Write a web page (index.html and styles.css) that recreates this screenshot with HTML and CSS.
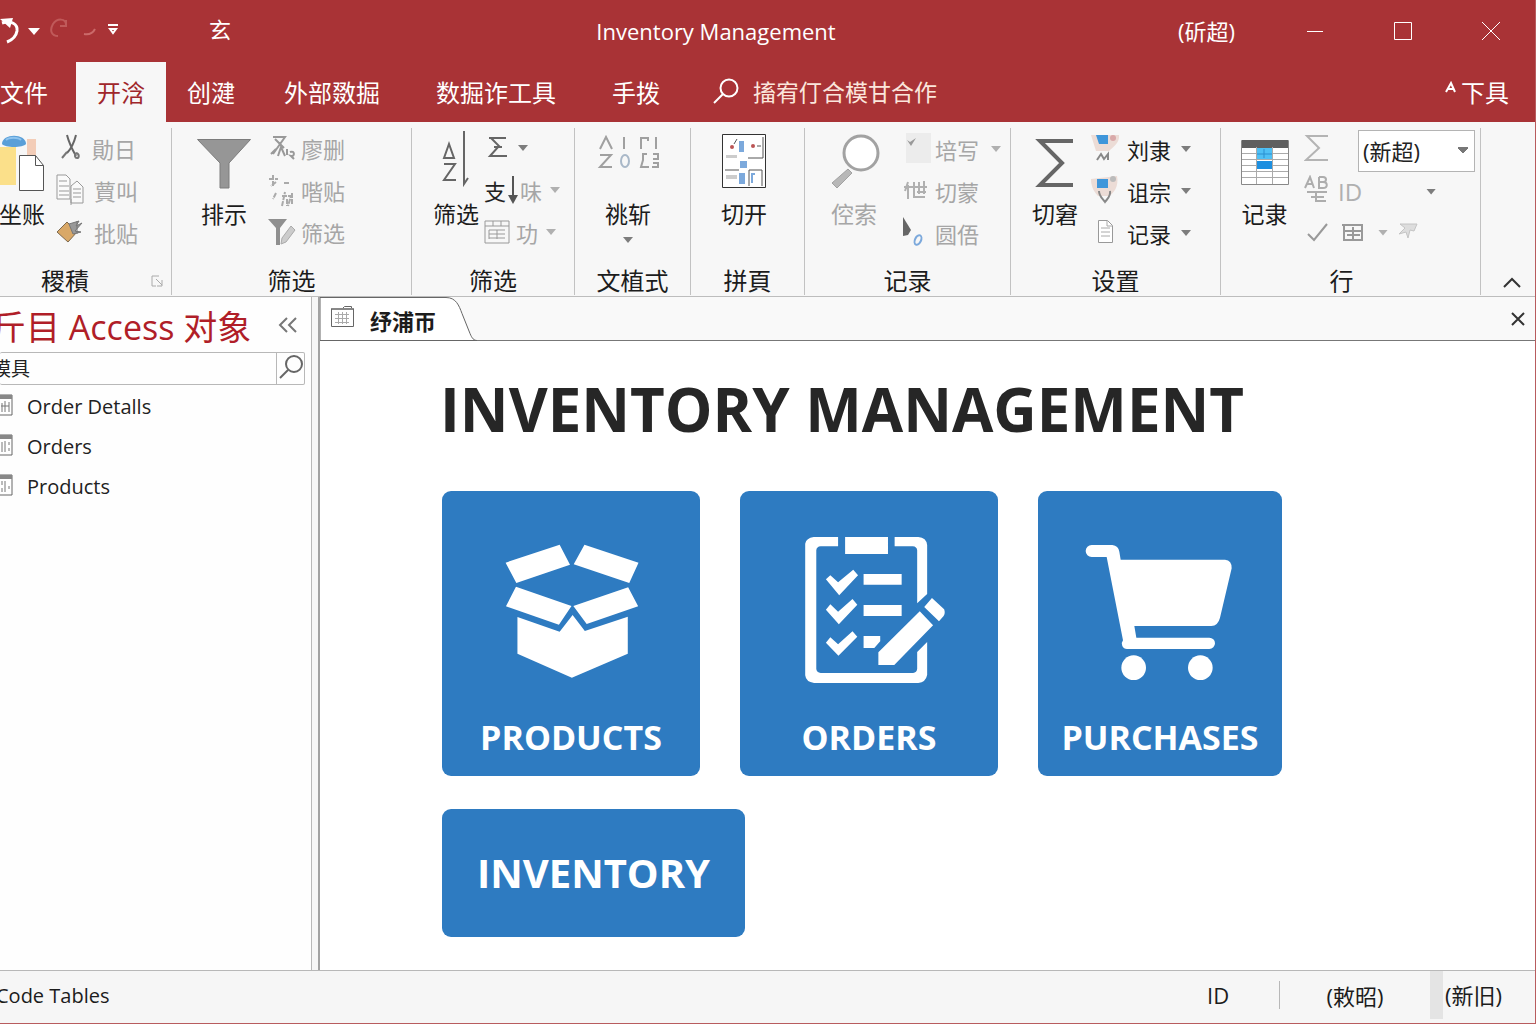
FILE: index.html
```html
<!DOCTYPE html>
<html lang="zh-CN">
<head>
<meta charset="utf-8">
<meta name="viewport" content="width=device-width, initial-scale=1">
<title>Inventory Management</title>
<link rel="stylesheet" href="styles.css">
</head>
<body>
<div class="app">
  <header class="titlebar">
    <div class="quick-access">
      <button class="qa" aria-label="Undo"><svg width="42" height="30" viewBox="0 0 42 30"><path d="M0 3l13-1-3 10" fill="#fff"/><path d="M2 7c9-3 16 1 15 8-1 6-5 9-10 11" fill="none" stroke="#fff" stroke-width="3"/><path d="M28 12h12l-6 7z" fill="#fff"/></svg></button>
      <button class="qa" aria-label="Redo"><svg width="48" height="30" viewBox="0 0 48 30"><path d="M17 9c0-7-9-7-13-1-4 7-1 12 5 12M17 4v6h-6" fill="none" stroke="#c05a5a" stroke-width="2"/><path d="M35 18c6 1 9-1 11-5" fill="none" stroke="#cb6a6a" stroke-width="2"/></svg></button>
      <button class="qa" aria-label="Customize"><svg width="16" height="30" viewBox="0 0 16 30"><path d="M4 9h10M6 13l3 4 3-4z" fill="none" stroke="#fff" stroke-width="2"/></svg></button>
      <span class="qa-text">玄</span>
    </div>
    <div class="window-title">Inventory Management</div>
    <span class="account">(斫超)</span>
    <div class="window-buttons">
      <button aria-label="Minimize"><svg width="20" height="20" viewBox="0 0 20 20"><path d="M2 10.500h16" /></svg></button>
      <button aria-label="Maximize"><svg width="20" height="20" viewBox="0 0 20 20"><path d="M1.500 1.500h17v17h-17z"/></svg></button>
      <button aria-label="Close"><svg width="20" height="20" viewBox="0 0 20 20"><path d="M1 1l18 18M19 1L1 19"/></svg></button>
    </div>
  </header>

  <nav class="tabs">
    <button class="tab file">文件</button>
    <button class="tab active">开浛</button>
    <button class="tab">创湕</button>
    <button class="tab wide">外部敪掘</button>
    <button class="tab wide">数掘诈工具</button>
    <button class="tab wide">手拨</button>
    <button class="tell-me"><svg width="26" height="26" viewBox="0 0 26 26"><circle cx="16" cy="10" r="8.500"/><path d="M10 16l-9 9"/></svg>搐宥仃合模甘合作</button>
    <button class="share"><svg width="12" height="12" viewBox="0 0 12 12"><path d="M1 11l5-9 4 9M3 8h6"/></svg>下具</button>
  </nav>

  <section class="ribbon" aria-label="Ribbon">
    <div class="group g-clip">
      <div class="body">
        <button class="big"><svg width="48" height="60" viewBox="0 0 48 60"><path d="M0 16h18v38H0z" fill="#fbe08a"/><path d="M29 8h9v16h-9z" fill="#f3cdb8"/><path d="M4 13c0-11 24-11 24 0-3 4-21 4-24 0z" fill="#5a9fd8"/><path d="M8 9c3-3 12-3 15 0" fill="none" stroke="#8fc4ee" stroke-width="2"/><path d="M21.500 24.500h16l8 10v25h-24z" fill="#fff" stroke="#555"/><path d="M37.500 24.500v10h8" fill="none" stroke="#555"/></svg>坐账</button>
        <div class="rows">
          <button class="row off"><svg width="28" height="30" viewBox="0 0 28 30"><path d="M11 2c2 8 5 14 9 21M20 2c-2 8-5 14-9 18" fill="none" stroke="#666" stroke-width="2"/><path d="M11 19l-5 6M20 20c4 1 3 5 1 5s-3-3-1-5" fill="none" stroke="#777" stroke-width="2"/></svg>勛日</button>
          <button class="row off"><svg width="30" height="32" viewBox="0 0 30 32"><path d="M1 1h9l4 4v20H1zM15 12l6-5 6 6v16H15z" fill="#fafafa" stroke="#999"/><path d="M3 7h8M3 12h10M3 17h10M3 21h10M17 15h8M17 19h8M17 23h8M15 25v6" stroke="#999"/></svg>蕒叫</button>
          <button class="row off"><svg width="30" height="26" viewBox="0 0 30 26"><path d="M1 13L11 3l10 10-9 10z" fill="#d9a867" stroke="#7d6a50"/><path d="M13 5l10-3-3 5 6-3-7 8 6 1-8 2zM21 2v13" fill="#999" stroke="#777"/></svg>批贴</button>
        </div>
      </div>
      <div class="caption">稷積<button class="launcher" aria-label="Launcher"><svg width="12" height="12" viewBox="0 0 12 12"><path d="M8 1H1v10h4M5 4l6 6M11 5v6H6" fill="none" stroke="#aaa"/></svg></button></div>
    </div>

    <div class="group g-filter">
      <div class="body">
        <button class="big"><svg width="54" height="60" viewBox="0 0 54 60"><path d="M.500 8.500h53L32 32v25h-9V32z" fill="#969696" stroke="#7c7c7c"/></svg>排示</button>
        <div class="rows">
          <button class="row off"><svg width="28" height="28" viewBox="0 0 28 28"><path d="M5 3h12L5 20M7 5l9 9M3 20l5-5M10 22l3-9 4 9M19 15v6M22 18c5-2 5 5 1 4l3 3" fill="none" stroke="#999" stroke-width="2"/></svg>廖删</button>
          <button class="row off"><svg width="28" height="34" viewBox="0 0 28 34"><path d="M1 6h9M5 2v12M8 9l-5 4M16 10h5M8 20l-3 6M14 23h9l-3 10M14 33l3-14M19 26v7M24 20v12" fill="none" stroke="#aaa" stroke-width="2" stroke-dasharray="5 1"/></svg>喈贴</button>
          <button class="row off"><svg width="28" height="30" viewBox="0 0 28 30"><path d="M0 2h19l-7 9v17H8V11z" fill="#8f8f8f"/><path d="M14 21l9-12 4 4-9 12-5 2z" fill="#ccc" stroke="#aaa"/></svg>筛选</button>
        </div>
      </div>
      <div class="caption">筛选</div>
    </div>

    <div class="group g-sort">
      <div class="body">
        <button class="big"><svg width="30" height="60" viewBox="0 0 30 60"><path d="M3 27l5-14 5 14zM3 33h11L3 49h12M23 0v53l4-6" fill="none" stroke="#666" stroke-width="2"/></svg>筛选</button>
        <div class="rows">
          <button class="row off"><svg width="26" height="26" viewBox="0 0 26 26"><path d="M22 3H5M7 3l8 8L6 21h17M10 12h8" fill="none" stroke="#666" stroke-width="2"/></svg><i class="caret"></i></button>
          <button class="row off"><span class="dark">支</span><svg width="10" height="30" viewBox="0 0 10 30"><path d="M5 1v22" stroke="#555" stroke-width="2"/><path d="M0 20h10l-5 9z" fill="#555"/></svg>味<i class="caret light"></i></button>
          <button class="row off"><svg width="26" height="26" viewBox="0 0 26 26"><path d="M1 2h24v22H1zM1 7h24M9 2v5M17 2v5M5 11h16M5 15h16M5 19h16M13 11v9M5 11v9" fill="none" stroke="#999"/></svg><span class="label">功</span><i class="caret light"></i></button>
        </div>
      </div>
      <div class="caption">筛选</div>
    </div>

    <div class="group g-text">
      <div class="body">
        <button class="big"><svg width="62" height="60" viewBox="0 0 62 60"><g fill="none" stroke="#a0a0a0" stroke-width="2"><path d="M3 18l6-12 6 12M3 24h11L3 36h12M27 6v12M43 7h8v3M44 7v11M59 6v12"/><path d="M50 23h-4v6l-2 7h8M56 23h5v5h-5M56 32h5v4h-6"/><ellipse cx="28" cy="30" rx="4" ry="6" stroke="#a9b8c8"/></g></svg>祧斩<i class="caret"></i></button>
      </div>
      <div class="caption">文植式</div>
    </div>

    <div class="group g-open">
      <div class="body">
        <button class="big"><svg width="44" height="60" viewBox="0 0 44 60"><path d="M.500 3.500h43v53H.500z" fill="#fff" stroke="#333"/><path d="M17 10h5v11h-5zM18 30h7v7h-7zM17 42h6v11h-6z" fill="#7ca9dc"/><circle cx="10" cy="16" r="2" fill="#b55"/><circle cx="31" cy="15" r="2" fill="#b55"/><path d="M4 24h11v3H4zM4 44h11v4H4z" fill="#ccc"/><path d="M26 27h15V6M3 39h14M27 55V39h13v16M12 13l3-5M35 15h4" fill="none" stroke="#555"/><path d="M33 43h-3v9" fill="none" stroke="#7ca9dc" stroke-width="2"/></svg>切开</button>
      </div>
      <div class="caption">拼頁</div>
    </div>

    <div class="group g-find">
      <div class="body">
        <button class="big off"><svg width="52" height="60" viewBox="0 0 52 60"><circle cx="33" cy="22" r="17" fill="#fff" stroke="#a2a2a2" stroke-width="3"/><path d="M20 38l4 4-15 15-5-5z" fill="#b8b8b8" stroke="#a2a2a2"/></svg>倥索</button>
        <div class="rows low">
          <button class="row off"><svg width="32" height="34" viewBox="0 0 32 34"><path d="M3 1h25v30H3z" fill="#ececec"/><path d="M4 8l4 6 5-8-6 4z" fill="#999"/></svg>培写<i class="caret light"></i></button>
          <button class="row off"><svg width="32" height="24" viewBox="0 0 32 24"><path d="M1 8h23M5 3L2 12M5 6v14M11 3v15h11M16 3v12M21 2v13M14 13h9" fill="none" stroke="#b0b0b0" stroke-width="2"/></svg>切蒙</button>
          <button class="row off"><svg width="32" height="34" viewBox="0 0 32 34"><path d="M0 1l8 13-3 5-5 1z" fill="#666"/><ellipse cx="15" cy="24" rx="3" ry="5" transform="rotate(25 15 24)" fill="none" stroke="#7ca9dc" stroke-width="2"/></svg>圆俉</button>
        </div>
      </div>
      <div class="caption">记录</div>
    </div>

    <div class="group g-set">
      <div class="body">
        <button class="big"><svg width="40" height="60" viewBox="0 0 40 60"><path d="M38 10H5l22 22L5 54h33" fill="none" stroke="#666" stroke-width="4"/></svg>切窘</button>
        <div class="rows low">
          <button class="row"><svg width="32" height="34" viewBox="0 0 32 34"><path d="M0 3h28c1 8-6 12-10 16H5z" fill="#ecdcd6"/><path d="M5 3h12v9H8z" fill="#3f96da"/><circle cx="22" cy="6" r="3" fill="#d9a9a9"/><path d="M6 28l4-6 3 5 4-5v6" fill="none" stroke="#888" stroke-width="2"/></svg>刘隶<i class="caret"></i></button>
          <button class="row"><svg width="32" height="34" viewBox="0 0 32 34"><path d="M0 5l26-3c2 10-3 17-8 20H7C2 17 0 11 0 5z" fill="#ecdcd6"/><path d="M6 5h11v9H6z" fill="#3f96da"/><circle cx="22" cy="5" r="3" fill="#bbb"/><path d="M8 17c0 5 3 7 6 11 3-4 6-6 5-11" fill="none" stroke="#888" stroke-width="2"/></svg>诅宗<i class="caret"></i></button>
          <button class="row"><svg width="32" height="34" viewBox="0 0 32 34"><path d="M7.500 4.500h9l5 5v17h-14z" fill="#fff" stroke="#999"/><path d="M10 12h9M10 16h9M10 20h9M16 5v5h5" fill="none" stroke="#aaa"/></svg>记录<i class="caret"></i></button>
        </div>
      </div>
      <div class="caption">设置</div>
    </div>

    <div class="group g-row">
      <div class="body">
        <button class="big"><svg width="48" height="60" viewBox="0 0 48 60"><path d="M.500 9.500h47v44H.500z" fill="#fff" stroke="#888"/><path d="M1 17v-8h46v8z" fill="#5f5f5f"/><path d="M1 22.500h46M1 28.500h46M1 34.500h46M1 40.500h46M1 46.500h46M15.500 16v37M31.500 16v37" stroke="#aaa"/><path d="M16 17h15v11H16z" fill="#4fc0f5"/><path d="M16 30h15v8H16z" fill="#1c8fe0"/><path d="M16 23h15M23 18v9" stroke="#2a8fd0"/></svg>记隶</button>
        <div class="controls">
          <div class="control-row"><button class="mini" aria-label="Totals"><svg width="26" height="34" viewBox="0 0 26 34"><path d="M24 2H3l12 12L2 26h22" fill="none" stroke="#b4b4b4" stroke-width="2"/></svg></button>
            <select class="combo" aria-label="Font"><option>(新超)</option></select></div>
          <div class="control-row"><button class="mini" aria-label="Spelling"><svg width="26" height="34" viewBox="0 0 26 34"><path d="M1 13L6 2l4 11M3 9h6M15 2v11h4c5 0 5-6 0-6h-4M15 2h4c4 0 4 5 0 5M3 17h20M7 22h13M12 17v9h10" fill="none" stroke="#adadad" stroke-width="2"/></svg></button>
            <span class="id-mark">ID</span><i class="caret gap-l"></i></div>
          <div class="control-row"><button class="mini" aria-label="Apply"><svg width="26" height="24" viewBox="0 0 26 24"><path d="M4 13l6 6L23 3" fill="none" stroke="#999" stroke-width="2"/></svg></button>
            <button class="mini" aria-label="Table"><svg width="26" height="24" viewBox="0 0 26 24"><path d="M4 4h21M6 5v14h18V5M6 10h18M15 6v13M9 14h13" fill="none" stroke="#999" stroke-width="2"/></svg></button><i class="caret light gap-s"></i>
            <button class="mini" aria-label="Filter"><svg width="24" height="24" viewBox="0 0 24 24"><path d="M4 3h17l-3 7-4-1-2 8-2-6-7 2 6-6z" fill="#ddd" stroke="#c4c4c4"/></svg></button></div>
        </div>
      </div>
      <div class="caption">行</div>
    </div>
    <button class="collapse" aria-label="Collapse ribbon"><svg width="18" height="11" viewBox="0 0 18 11"><path d="M1 10l8-8 8 8" fill="none" stroke="#333" stroke-width="2"/></svg></button>
  </section>

  <div class="workspace">
    <aside class="nav-pane">
      <div class="nav-head"><h2>斤目 Access 对象</h2><button class="shutter" aria-label="Collapse pane"><svg width="20" height="16" viewBox="0 0 20 16"><path d="M9 1L2 8l7 7M18 1l-7 7 7 7" fill="none" stroke="#777" stroke-width="2"/></svg></button></div>
      <form class="search"><input type="text" value="模具" aria-label="Search"><button type="button" aria-label="Search"><svg width="24" height="28" viewBox="0 0 24 28"><circle cx="15" cy="9" r="8"/><path d="M9 15l-8 8"/></svg></button></form>
      <ul class="objects">
        <li><a href="#"><svg width="13" height="22" viewBox="0 0 13 22"><path d="M0 1h12v20H0" fill="#fff" stroke="#666"/><path d="M0 1h12v4H0z" fill="#888"/><path d="M2 9v9M5 7v11M9 8v10M1 12h8" stroke="#777"/></svg>Order Detalls</a></li>
        <li><a href="#"><svg width="13" height="22" viewBox="0 0 13 22"><path d="M0 1h12v20H0" fill="#fff" stroke="#666"/><path d="M0 1h12v4H0z" fill="#888"/><path d="M2 8v10M5 7v11M9 8v3M9 14v3" stroke="#777"/></svg>Orders</a></li>
        <li><a href="#"><svg width="13" height="22" viewBox="0 0 13 22"><path d="M0 1h12v20H0" fill="#fff" stroke="#666"/><path d="M0 1h12v4H0z" fill="#888"/><path d="M2 7v4M2 14v4M5 7v11M9 12v3" stroke="#777"/></svg>Products</a></li>
      </ul>
    </aside>

    <main class="document">
      <div class="doc-tabs">
        <button class="doc-tab">
          <svg class="tab-shape" width="157" height="44" viewBox="0 0 157 44"><path d="M0 .500h126c10 0 13 8 16 16l8 20c2 5 4 7 7 7H0z" fill="#fff" stroke="#666"/></svg>
          <svg class="form-icon" width="23" height="24" viewBox="0 0 23 24"><path d="M.500 3.500h11l2-2h7v2h2v18h-22z" fill="#fff" stroke="#666"/><path d="M1 4h21" stroke="#888" stroke-width="2"/><path d="M4 9.500h14M4 13.500h14M4 17.500h14M7.500 7v12M11.500 7v12M15.500 7v12" stroke="#aaa"/></svg>
          <span>纾浦帀</span>
        </button>
        <button class="doc-close" aria-label="Close document"><svg width="14" height="14" viewBox="0 0 14 14"><path d="M1 1l12 12M13 1L1 13" stroke="#333" stroke-width="2"/></svg></button>
      </div>
      <div class="form-page">
        <h1>INVENTORY MANAGEMENT</h1>
        <div class="tiles">
          <button class="tile"><svg width="137" height="150" viewBox="196 165 370 450" preserveAspectRatio="none"><path d="M203 248l146-54 28 60-145 55zM416 194l146 54-25 61-150-56zM231 320l150 58-34 56-143-55zM534 322l27 57-139 53-36-54zM235 411l114 44 35-50 33 48 116-43v111l-151 72-147-72z"/></svg><span>PRODUCTS</span></button>
          <button class="tile"><svg width="153" height="150" viewBox="981 165 414 450" preserveAspectRatio="none"><path d="M1103 171h-66q-20 3-23 20v395q2 20 24 23h282q20-2 24-24v-99l-27 30v50q-1 11-11 13h-250q-11-2-12-12V211q1-11 12-12h47zM1256 171h64q22 2 24 24v147l-27 28V211q-1-11-12-12h-49zM1122 171h116v51h-116zM1172 282h103v32h-103zM1172 375h103v33h-103zM1172 468h45v16l-16 20h-29zM1070 298l12-12 21 21 41-38 13 17-51 60zM1070 389l12-16 21 22 39-38 13 17-50 59zM1070 488l12-16 21 21 39-39 13 16-51 57zM1357 354l33 34q4 12-2 21l-12 15-40-43zM1324 394l36 42-105 119h-43v-38z"/></svg><span>ORDERS</span></button>
          <button class="tile narrow"><svg width="151" height="150" viewBox="167 165 453 450"><path d="M187 195h62q18 2 21 20l4 24h313q21 2 20 26l-35 148q-6 24-26 25H315l6 35h219a16 16 0 0 1 0 34H293a16 16 0 0 1-12-26l-49-250h-45a18 18 0 0 1 0-36z"/><circle cx="313" cy="563" r="37"/><circle cx="513" cy="563" r="37"/></svg><span>PURCHASES</span></button>
        </div>
        <button class="tile inventory"><span>INVENTORY</span></button>
      </div>
    </main>
  </div>

  <footer class="statusbar">
    <span class="status-text">Code Tables</span>
    <span class="status-id">ID</span>
    <span class="status-mode">(敕昭)</span>
    <span class="status-end">(新旧)</span>
  </footer>
</div>
</body>
</html>
```
FILE: styles.css
```css
* { box-sizing: border-box; }

body {
  margin: 0;
  background: #f6f6f6;
  color: #1c1c1c;
  font-family: "Open Sans", "Noto Sans CJK SC", sans-serif;
  font-size: 20px;
}

button {
  margin: 0;
  padding: 0;
  border: 0;
  background: none;
  color: inherit;
  font: inherit;
  white-space: nowrap;
}

svg { display: block; flex: none; }

.app {
  display: flex;
  flex-direction: column;
  min-height: 100vh;
  overflow: hidden;
  border-right: 1px solid #b85c5e;
  border-bottom: 1px solid #b85c5e;
}

/* Title bar */
.titlebar {
  display: flex;
  align-items: center;
  height: 62px;
  background: #a93336;
  color: #fff;
}

.quick-access { display: flex; align-items: center; width: 254px; }
.qa { padding-right: 7px; }
.qa-text { margin-left: 82px; font-size: 22px; line-height: 26px; padding-bottom: 4px; }
.window-title { flex: 1; text-align: center; font-size: 22px; }
.account { margin-right: 36px; padding-bottom: 3px; font-size: 22px; }
.window-buttons { display: flex; }
.window-buttons button { display: flex; align-items: center; justify-content: center; width: 88px; height: 62px; }
.window-buttons path, .tell-me circle, .tell-me path { fill: none; stroke: #fff; }

/* Ribbon tabs */
.tabs {
  display: flex;
  height: 60px;
  background: #a93336;
  color: #fff;
  font-size: 24px;
}

.tab { padding: 0 21px 2px; }
.tab.file { padding: 0 28px 2px 0; }
.tab.wide { padding: 0 28px 2px; }
.tab.active { background: #f7f7f7; color: #a0262b; }
.tell-me { display: flex; align-items: center; gap: 14px; padding: 0 0 2px 25px; font-size: 23px; color: #fbe6dc; }
.tell-me svg { stroke-width: 2px; }
.share { display: flex; align-items: center; gap: 4px; margin-left: auto; padding: 0 26px 2px 0; }
.share svg { margin-bottom: 8px; fill: none; stroke: #fff; stroke-width: 2px; }

/* Ribbon */
.ribbon {
  display: flex;
  height: 175px;
  padding-top: 6px;
  background: #f7f7f7;
  border-bottom: 1px solid #bdbdbd;
}

.group { display: flex; flex-direction: column; flex: none; border-right: 1px solid #c2c2c2; margin-bottom: 1px; }
.body { display: flex; flex: 1; }
.caption { display: flex; align-items: center; justify-content: center; height: 29px; font-size: 24px; line-height: 29px; }

.g-clip { width: 172px; }
.g-filter { width: 240px; }
.g-sort { width: 163px; }
.g-text { width: 116px; }
.g-open { width: 114px; }
.g-find { width: 206px; }
.g-set { width: 210px; }
.g-row { width: 260px; }

.g-clip .caption { padding-left: 41px; justify-content: flex-start; }
.g-row .caption { padding-right: 18px; }
.launcher { margin-left: auto; padding-right: 8px; }

.big {
  display: flex;
  flex-direction: column;
  align-items: center;
  height: 120px;
  padding-top: 3px;
  font-size: 23px;
  line-height: 46px;
}

.g-clip .big { width: 56px; padding-right: 12px; }
.g-filter .big { width: 96px; padding-left: 8px; }
.g-sort .big { width: 72px; padding-left: 16px; }
.g-text .big, .g-open .big { width: 106px; }
.g-find .big { width: 98px; }
.g-set .big { width: 80px; padding-left: 8px; }
.g-row .big { width: 83px; padding-left: 4px; }

.row { display: flex; align-items: center; gap: 5px; height: 42px; padding-bottom: 2px; font-size: 22px; }
.rows.low .row { padding-bottom: 0; }
.off { color: #a6a6a6; }
.g-clip .row { gap: 8px; }
.g-sort .row { gap: 2px; }
.g-find .row { gap: 0; }
.g-set .row { gap: 4px; }
.dark { color: #222; }
.label { padding-left: 4px; }

.caret {
  flex: none;
  width: 10px;
  height: 6px;
  margin-left: 6px;
  background: #7d7d7d;
  clip-path: polygon(0 0, 100% 0, 50% 100%);
}
.g-find .caret { margin-left: 12px; }
.caret.light { background: #b0b0b0; }
.big .caret { margin-left: 0; }
.caret.gap-l { margin-left: 56px; }
.caret.gap-s { margin-left: 6px; }

.controls { display: flex; flex-direction: column; padding-top: 2px; }
.control-row { display: flex; align-items: center; gap: 8px; height: 41px; }
.id-mark { color: #b0b0b0; font-size: 24px; }

.combo {
  appearance: none;
  width: 117px;
  height: 42px;
  margin-left: 20px;
  padding: 0 4px;
  border: 1px solid #b4b4b4;
  border-radius: 0;
  background-color: #fff;
  background-image: conic-gradient(from -40deg at 50% 100%, #777 80deg, transparent 0);
  background-repeat: no-repeat;
  background-size: 12px 7px;
  background-position: right 5px center;
  color: #222;
  font: inherit;
  font-size: 22px;
}

.collapse { margin: auto 14px 8px auto; }

/* Workspace */
.workspace { display: flex; flex: 1; }

.nav-pane {
  flex: none;
  width: 312px;
  margin-right: 6px;
  background: #fefefe;
  border-right: 1px solid #b8b8b8;
  overflow: hidden;
}

.nav-head { display: flex; align-items: center; height: 55px; padding-right: 13px; }
.nav-head h2 {
  margin: 0 auto 0 -8px;
  padding-top: 6px;
  color: #b01e28;
  font-size: 34px;
  font-weight: 400;
  line-height: 49px;
  white-space: nowrap;
}

.search { display: flex; height: 33px; margin-right: 6px; border: 1px solid #b8b8b8; border-left: 0; border-radius: 2px; }
.search input { flex: 1; min-width: 0; border: 0; padding: 0 0 2px; background: none; text-indent: -8px; font: inherit; font-size: 19px; color: #222; }
.search button { width: 28px; padding-left: 2px; border-left: 1px solid #b8b8b8; }
.search svg { fill: none; stroke: #666; stroke-width: 2px; }

.objects { list-style: none; margin: 0; padding: 2px 0 0; }
.objects a { display: flex; align-items: center; gap: 14px; height: 40px; padding-bottom: 1px; color: #222; font-size: 20px; text-decoration: none; }
.objects svg { margin-bottom: 4px; }

.document { display: flex; flex-direction: column; flex: 1; min-width: 0; border-left: 2px solid #a2a2a2; background: #fff; }
.doc-tabs { display: flex; justify-content: space-between; height: 44px; background: #f9f9f9; border-bottom: 1px solid #777; }
.doc-tab { position: relative; display: flex; align-items: center; gap: 16px; width: 157px; padding-left: 11px; font-size: 22px; font-weight: 700; }
.doc-tab span { position: relative; padding-top: 2px; }
.tab-shape { position: absolute; left: 0; top: 0; }
.form-icon { position: relative; margin-bottom: 4px; }
.doc-close { padding-right: 10px; }

.form-page { padding: 32px 40px 32px 122px; }
.form-page h1 { margin: 0 0 0 -2px; color: #262626; font-size: 60px; font-weight: 700; line-height: 72px; }
.tiles { display: flex; flex-wrap: wrap; gap: 33px 40px; margin: 46px 0 33px; }

.tile {
  display: flex;
  flex-direction: column;
  align-items: center;
  width: 258px;
  height: 285px;
  padding-top: 44px;
  border-radius: 9px;
  background: #2e7bc1;
  color: #fff;
  font-size: 34px;
  font-weight: 700;
  line-height: 48px;
}
.tile svg { margin-bottom: 28px; fill: #fff; }
.tile.narrow { width: 244px; }
.tile.inventory { justify-content: center; width: 303px; height: 128px; padding: 0; font-size: 40px; }

/* Status bar */
.statusbar { display: flex; align-items: center; height: 53px; padding-bottom: 4px; background: #f6f6f6; border-top: 1px solid #b8b8b8; font-size: 22px; }
.status-text { margin-left: -4px; margin-right: auto; font-size: 20px; }
.status-id { width: 73px; line-height: 28px; border-right: 1px solid #b8b8b8; }
.status-mode { width: 150px; text-align: center; }
.status-end { width: 105px; padding-left: 2px; line-height: 48px; border-left: 13px solid #e4e4e4; }
```
